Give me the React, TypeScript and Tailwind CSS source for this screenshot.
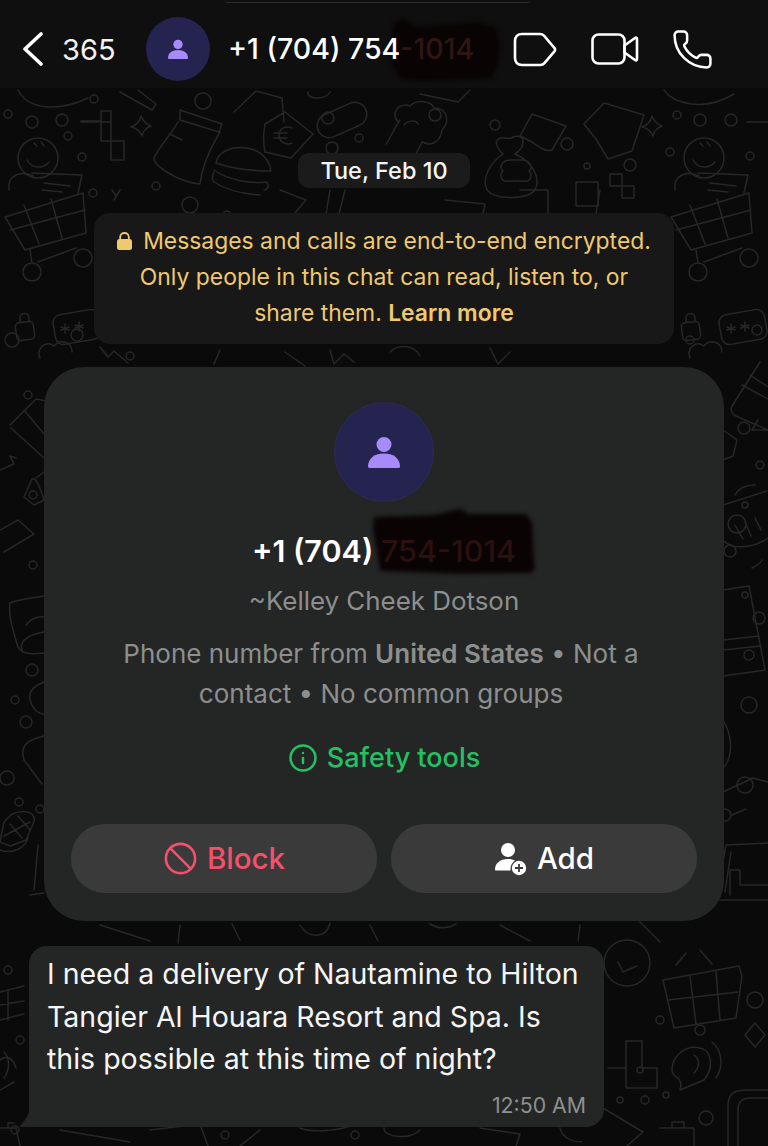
import { Ban, Info, Phone } from 'lucide-react';

const FONT = 'font-["Inter","Noto_Sans",sans-serif]';

const DOTS: [number, number, number][] = [
  [8, 114, 4], [32, 122, 6], [62, 120, 6], [68, 136, 4], [82, 157, 4], [94, 99, 4], [203, 101, 8], [156, 186, 4], [359, 138, 4], [332, 148, 6],
  [435, 115, 6], [495, 125, 5], [567, 144, 6], [677, 115, 4], [700, 120, 6], [731, 120, 6], [670, 152, 4], [750, 156, 4], [587, 166, 3],
  [630, 165, 6], [93, 193, 4], [190, 205, 8], [227, 215, 4], [12, 340, 7], [77, 335, 6], [690, 340, 4],
  [757, 330, 5], [130, 356, 4], [28, 395, 4], [33, 495, 4], [33, 565, 4], [32, 670, 6], [15, 700, 4], [26, 722, 6], [7, 778, 7],
  [19, 802, 4], [40, 809, 4], [744, 428, 6], [745, 505, 3], [760, 465, 4], [745, 595, 3], [759, 618, 6], [749, 655, 5], [749, 705, 8],
  [745, 785, 8], [660, 1020, 4], [700, 1030, 5], [755, 1000, 8], [645, 1100, 4], [706, 1118, 7], [15, 1130, 4], [8, 970, 4], [225, 1135, 4],
  [355, 1135, 4], [620, 1100, 3], [640, 1070, 3], [666, 1095, 3], [20, 1040, 4],
];

function Cart({ x }: { x: number }) {
  return (
    <g transform={`translate(${x} 0)`}>
      <path d="M5 217l78-24 3 40-61 17zM24 205l15 39M51 199l11 39M10 230l75-20" />
      <path d="M30 250l2 13M38 262l38-14" />
      <circle cx="32" cy="272" r="9" />
      <circle cx="83" cy="258" r="9" />
    </g>
  );
}

function Smile({ x }: { x: number }) {
  return (
    <g transform={`translate(${x} 0)`}>
      <circle cx="38" cy="158" r="20" />
      <path d="M27 160c5 9 16 9 22 2M34 143l3 3M41 142l3 4" />
      <path d="M33 176c-14-6-26 0-24 14M32 173l50 2-4 18M44 183l26 3M42 190l20 2" />
    </g>
  );
}

function KeyBox({ x }: { x: number }) {
  return (
    <g transform={`translate(${x} 0)`}>
      <rect x="54" y="312" width="46" height="30" rx="8" transform="rotate(-10 77 327)" />
      <path d="M65 324v9M61 327l8 3M61 330l8-3M79 322v9M75 325l8 3M75 328l8-3" />
      <rect x="16" y="322" width="18" height="18" rx="4" transform="rotate(-8 25 331)" />
      <path d="M20 322v-4c0-6 9-6 9 0v4" />
    </g>
  );
}

function Wallpaper() {
  return (
    <svg className="absolute inset-0" width="768" height="1146" viewBox="0 0 768 1146" fill="none" stroke="#272727" strokeWidth="1.5" strokeLinecap="round" strokeLinejoin="round">
      {DOTS.map(([x, y, r], i) => (
        <circle key={i} cx={x} cy={y} r={r} />
      ))}
      <Cart x={0} />
      <Cart x={666} />
      <Smile x={0} />
      <Smile x={666} />
      <KeyBox x={0} />
      <KeyBox x={666} />

      {/* top curves cut by the header */}
      <path d="M18 90c10 20 40 22 70 8M120 92l32 18 4-6-18-14M308 92c-2 8 18 8 22 0M664 90c10 14 40 22 70 4M470 90l-12 12 -38-8" />
      {/* blocks */}
      <path d="M81 122h20v-11h10v30h13v19h-13v-19H101v-20H81zM101 122h10" />
      <path d="M747 122h21M576 182h22v24h-22zM610 174h12v12h-12zM622 186h12v12h-12z" />
      {/* stars */}
      <path d="M131 127c6-2 9-6 10-11 2 5 5 8 10 10-5 2-8 5-9 10-2-5-6-8-11-9z" />
      <path d="M642 127c6-2 9-6 10-11 2 5 5 8 10 10-5 2-8 5-9 10-2-5-6-8-11-9z" />
      {/* sack and burger */}
      <path d="M180 110l42 14-3 8-39-12zM178 122c-8 14-20 26-24 36 0 8 24 24 46 26 2-16 8-32 20-52M170 134l12 6" />
      <path d="M216 163c2-20 50-24 55 8-18 0-38-2-55-8zM214 170c14 10 36 14 52 12 4 2 2 8-2 8M214 172c-2 4-2 8 0 10 12 8 30 12 46 13" />
      {/* house tag with euro */}
      <path d="M234 112l22-21 26 7 2 24M265 124l20-12 28 22-22 24-26-6c-2-10-2-18 0-28zM292 128c-7-3-13 1-13 7s6 11 13 8M274 133h13M274 138h13" />
      {/* switch */}
      <rect x="316" y="108" width="52" height="24" rx="12" transform="rotate(-24 342 120)" />
      <circle cx="328" cy="118" r="6" />
      {/* poodle */}
      <path d="M398 122c-8-10 2-20 12-16 8-8 22-4 24 2 14 0 16 14 8 22-2 14-12 16-20 12l-12 24M400 120c-6 8-8 16-14 24M404 125c4-5 12-5 14-1" />
      {/* money bag and tag */}
      <path d="M497 140c6-5 12 0 14-2s12-4 12 4-6 10-8 12c18 8 26 24 20 36-8 10-40 10-48 0-6-12 4-28 16-36-4-4-8-10-6-14zM511 160c-10 0-12 8-8 11-4 4-2 12 6 10h14c8 2 10-6 6-10 4-3 2-11-8-11z" />
      <path d="M520 136l12-22 34 12-14 24c-6 2-12-2-20-8z" />
      {/* mitten */}
      <path d="M584 124l20-21 40 12-12 36-24 8-12-20z" />
      {/* behind the banner */}
      <path d="M120 190l-6 10M112 190l4 6M280 190l26 10-12 14M330 190l-4 24M345 190l-6 24M445 200l40 4 -2 10M520 190h28v24M600 190l-4 24" />
      <path d="M40 358c-4-10 6-18 14-12 6-8 18-4 18 6M100 347l8 10 6-6 14 12M220 350l-6 14M285 352l20 14M330 350l4 14 10-10 10 8M390 352c8-8 24-8 30 4M490 348l8 16 12-12M690 358c-4-10 6-18 14-12 6-8 18-4 18 6" />

      {/* left edge */}
      <path d="M10 425l26-26 10 2M11 428l33 30M24 410l20 24" />
      <path d="M0 470l14-6-4-8 6 2M36 478l8-6M44 500l-10 5-10-8 8-18c4-2 8 8 12 21z" />
      <path d="M0 530l18-10 16 14-30 18" />
      <path d="M44 596c-14 2-24 3-34 7-2 14 4 30 8 44 4 6 10 8 26 6M26 625c8-10 18-8 18-8M22 650c-2-6 0-14 22-18" />
      <path d="M44 682c-10 4-16 10-14 18s8 14 14 14M44 736c-18 4-24 10-20 24l18 24" />
      <path d="M4 822l8-8c10-4 24-4 22 8l-8 18-16 6-10-4zM10 824l12 14M18 816l12 14M4 836l26-14M0 850c10 4 24 0 28-12" />
      <path d="M38 845l-4 45M30 895l14-2" />
      {/* right edge */}
      <path d="M760 362l-28 44c-2 4 0 8 4 10l32 14M742 385l26 14M750 375l18 12" />
      <path d="M723 430l14 10-4 16-10 4M758 420l-6 10h16" />
      <path d="M723 505l44-14M735 495c4-8 12-10 20-10M723 540c10 12 34 6 45-2M735 525l8 14M745 522l6 14M755 518l6 12" />
      <circle cx="737" cy="524" r="9" />
      <circle cx="730" cy="551" r="6" />
      <path d="M762 560c-2 4-6 6-10 8M723 590l26-4 16 84-42 6M723 640l36-4M723 650l38-4" />
      <path d="M723 720c12 20 8 40 0 48M723 792l30-14 15 4M732 815l14-6" />
      <circle cx="725" cy="815" r="6" />
      <path d="M726 845l42-2M718 890l8-45M725 892l6-40M706 900h62M768 885h-28v-15h-10v25" />
      {/* between card and bubble */}
      <path d="M100 925l50 16M180 925l-2 18M240 940l-8-16M300 925c8 14 26 14 30-2M370 925l8 16M430 924c10 6 20 4 26 0M500 925l30 16M580 925l-2 16M640 922l20 20" />

      {/* bottom right */}
      <circle cx="627" cy="963" r="23" />
      <path d="M618 962l5 10 14-6" />
      <path d="M676 965l10-12M700 950l12 14M663 980l76-14 3 10-6 42-62 10zM690 976l6 48M716 972l4 48M668 1000l70-8" />
      <path d="M745 1035l10-12 10 12-10 12z" />
      <path d="M608 1068h18v-27h16v27h15v20h-15M626 1068v20h16" />
      <path d="M672 1070c0-14 14-26 28-22 12 2 14 20 4 32l-24 10c2-6 0-10-2-12-4-2-6-4-6-8zM694 1055c6 4 6 12 0 18M712 1042c10 8 12 24 4 36" />
      <path d="M728 1146v-40c0-14 8-16 20-16h20M738 1146v-36c0-8 4-12 12-12h18" />
      <path d="M603 1108l40 24-16 14M660 1128h34v18M672 1128v-6h12v6" />
      {/* bottom left */}
      <path d="M0 992l24-6M0 1020l24-6M8 990v30M0 1005l24-4M0 1060c8-6 14 0 16 8M0 1090l14-8M4 1052c6 6 6 18 0 26" />
      <path d="M0 1128h16l4 18M8 1128v-5h6" />
      {/* under the bubble */}
      <path d="M60 1130l70 12M150 1130l50-6 8 22M260 1130l-20 16M300 1128c10 4 32 4 50-2M384 1128c0 10 26 12 36 2M480 1128l40 6-4 12M560 1128c2 8 10 14 22 14" />
    </svg>
  );
}

function PersonIcon({ size }: { size: number }) {
  return (
    <svg width={size} height={size} viewBox="0 0 32 32" fill="#a78bfa">
      <circle cx="16" cy="8.500" r="7.500" />
      <path d="M0 30.500C0 22 7 17.500 16 17.500s16 4.500 16 13c0 .8-.5 1.500-1.500 1.500h-29C.5 32 0 31.300 0 30.500z" />
    </svg>
  );
}

function TagIcon() {
  return (
    <svg width="44" height="35" viewBox="0 0 44 35" fill="none" stroke="white" strokeWidth="2.600" strokeLinejoin="round">
      <path d="M9 2h18c2 0 3 .6 4.200 1.800L41 15.500c1.300 1.300 1.300 3 0 4.400l-9.600 11.300c-1 1.200-2.300 1.800-4 1.800H9c-4.500 0-7-2.500-7-7V9c0-4.500 2.500-7 7-7z" />
    </svg>
  );
}

function VideoIcon() {
  return (
    <svg width="48" height="32" viewBox="0 0 48 32" fill="none" stroke="white" strokeWidth="2.600" strokeLinejoin="round">
      <rect x="1.500" y="1.500" width="32" height="29" rx="6" />
      <path d="M33.500 12.500l10.500-7.500c1-.7 2-.2 2 1v20c0 1.200-1 1.700-2 1l-10.500-7.500z" />
    </svg>
  );
}

function AddPersonIcon() {
  return (
    <svg width="34" height="34" viewBox="0 0 34 34" fill="white">
      <circle cx="14" cy="8" r="7" />
      <path d="M1 28c0-7 5-11 13-11 3 0 5 .5 7 1.600-3 1.900-4.500 5-4.500 8.400 0 .500 0 1 .1 1.500H2c-.6 0-1-.5-1-1z" />
      <circle cx="25" cy="26" r="7.200" />
      <path d="M25 22v8M21 26h8" stroke="#3a3a3a" strokeWidth="1.800" />
    </svg>
  );
}

function LockIcon() {
  return (
    <svg width="15" height="18" viewBox="0 0 15 18" fill="#f0c96f">
      <path d="M3.200 8V5.200C3.200 2.600 5 1 7.500 1s4.300 1.600 4.300 4.200V8" fill="none" stroke="#f0c96f" strokeWidth="1.800" />
      <rect y="7" width="15" height="11" rx="2.500" />
    </svg>
  );
}

export default function App() {
  return (
    <div className={`relative w-[768px] h-[1146px] overflow-hidden bg-[#0a0a0a] ${FONT}`}>
      <Wallpaper />

      {/* header */}
      <header className="relative flex items-center h-[88px] pl-[23px] pr-[54px] pt-[10px] bg-[#0f0f0f] text-white">
        <div className="absolute left-[225px] top-0 w-[305px] h-[3px] rounded-b-[12px] border-b border-[#2c2c2c]" />
        <svg width="20" height="34" viewBox="0 0 20 34" fill="none" stroke="white" strokeWidth="3.600" strokeLinecap="round" strokeLinejoin="round" className="shrink-0">
          <path d="M18 2L2 17l16 15" />
        </svg>
        <span className="ml-[19px] w-[53px] text-[29px] leading-none text-[#f2f2f2] whitespace-nowrap">365</span>
        <div className="ml-[31px] flex items-center justify-center w-[64px] h-[64px] shrink-0 rounded-full bg-[#25234f]">
          <PersonIcon size={20} />
        </div>
        <div className="relative ml-[18px] text-[28.500px] leading-none font-medium whitespace-nowrap">
          <svg className="absolute left-[162px] top-[-17px] blur-[2px]" width="112" height="67" viewBox="0 5 110 62" preserveAspectRatio="none" fill="#090303">
            <path d="M3 12l8-6 7 2 8 6 22-2 38-3 18 5 4 16-2 18-6 12-30 2-38 1-22-2-8-14 1-20z" />
          </svg>
          <span className="relative">+1 (704) 754</span>
          <span className="relative text-[#2e1612]">-1014</span>
        </div>
        <div className="ml-auto flex items-center">
          <TagIcon />
          <div className="ml-[34px]"><VideoIcon /></div>
          <Phone size={43} strokeWidth={1.400} className="ml-[32px]" />
        </div>
      </header>

      {/* chat */}
      <main className="relative flex flex-col items-center pt-[65px]">
        <div className="flex items-center justify-center w-[172px] h-[35px] rounded-[11px] bg-[#1b1b1b] text-[23.500px] font-medium text-[#f4f4f4] whitespace-nowrap">
          Tue, Feb 10
        </div>

        <div className="mt-[25px] flex flex-col items-center w-[580px] h-[131px] pt-[10px] rounded-[16px] bg-[#181818] text-[22.900px] leading-[36px] text-[#f0c96f] whitespace-nowrap">
          <p className="flex items-center gap-[11px]">
            <LockIcon />
            Messages and calls are end-to-end encrypted.
          </p>
          <p>Only people in this chat can read, listen to, or</p>
          <p>
            share them. <span className="font-semibold">Learn more</span>
          </p>
        </div>

        <section className="mt-[23px] flex flex-col items-center w-[680px] h-[554px] rounded-[40px] bg-[#242626] px-[27px] pt-[35px]">
          <div className="flex items-center justify-center w-[100px] h-[100px] rounded-full bg-[#25234f] border border-[#2c2b55]">
            <PersonIcon size={32} />
          </div>
          <div className="relative mt-[31px] text-[30.500px] leading-[36px] font-semibold text-white whitespace-nowrap">
            <svg className="absolute left-[120px] top-[-26px] blur-[2px]" width="163" height="70" viewBox="0 0 163 70" fill="#0a0303">
              <path d="M2 10l60-2 20-5 8-1 6 5 58 0 6 8 2 40 1 8-5 3-70 1-80-3-3-20-4-20z" />
            </svg>
            <span className="relative">+1 (704) </span>
            <span className="relative text-[#2a100e] font-medium">754-1014</span>
          </div>
          <p className="mt-[14px] text-[25.900px] leading-[36px] text-[#8d8f8f] whitespace-nowrap">~Kelley Cheek Dotson</p>
          <p className="mt-[15px] w-[580px] pr-[6px] text-center text-[26px] leading-[39.500px] text-[#8d8f8f]">
            Phone number from <span className="font-semibold">United States</span> • Not a contact • No common groups
          </p>
          <div className="mt-[27px] flex items-center gap-[9px] text-[27px] leading-[36px] font-medium text-[#25c063] whitespace-nowrap">
            <Info size={30} strokeWidth={2} />
            Safety tools
          </div>
          <div className="mt-[48px] flex gap-[14px] w-full">
            <button className="flex flex-1 items-center justify-center gap-[9px] h-[69px] rounded-[34px] bg-[#3a3a3a] text-[29.500px] font-medium text-[#f4506a]">
              <Ban size={35} strokeWidth={1.800} />
              Block
            </button>
            <button className="flex flex-1 items-center justify-center gap-[9px] h-[69px] rounded-[34px] bg-[#3a3a3a] text-[29.500px] font-medium text-white">
              <AddPersonIcon />
              Add
            </button>
          </div>
        </section>

        <div className="relative mt-[25px] self-start ml-[29px] w-[575px] h-[181px] rounded-[18px] rounded-bl-none bg-[#242626] pl-[18px] pt-[7px]">
          <svg className="absolute left-[-9px] bottom-0" width="11" height="22" viewBox="0 0 11 22" fill="#242626">
            <path d="M11 0v22H2C0 22-.500 21 .500 20 5 16 9 10 11 0z" />
          </svg>
          <p className="text-[28.500px] leading-[42.500px] text-[#f5f5f5] whitespace-nowrap">
            I need a delivery of Nautamine to Hilton
            <br />
            Tangier Al Houara Resort and Spa. Is
            <br />
            this possible at this time of night?
          </p>
          <span className="absolute right-[18px] bottom-[8px] text-[21.300px] leading-[28px] text-[#8d8f8f] whitespace-nowrap">12:50 AM</span>
        </div>
      </main>
    </div>
  );
}
